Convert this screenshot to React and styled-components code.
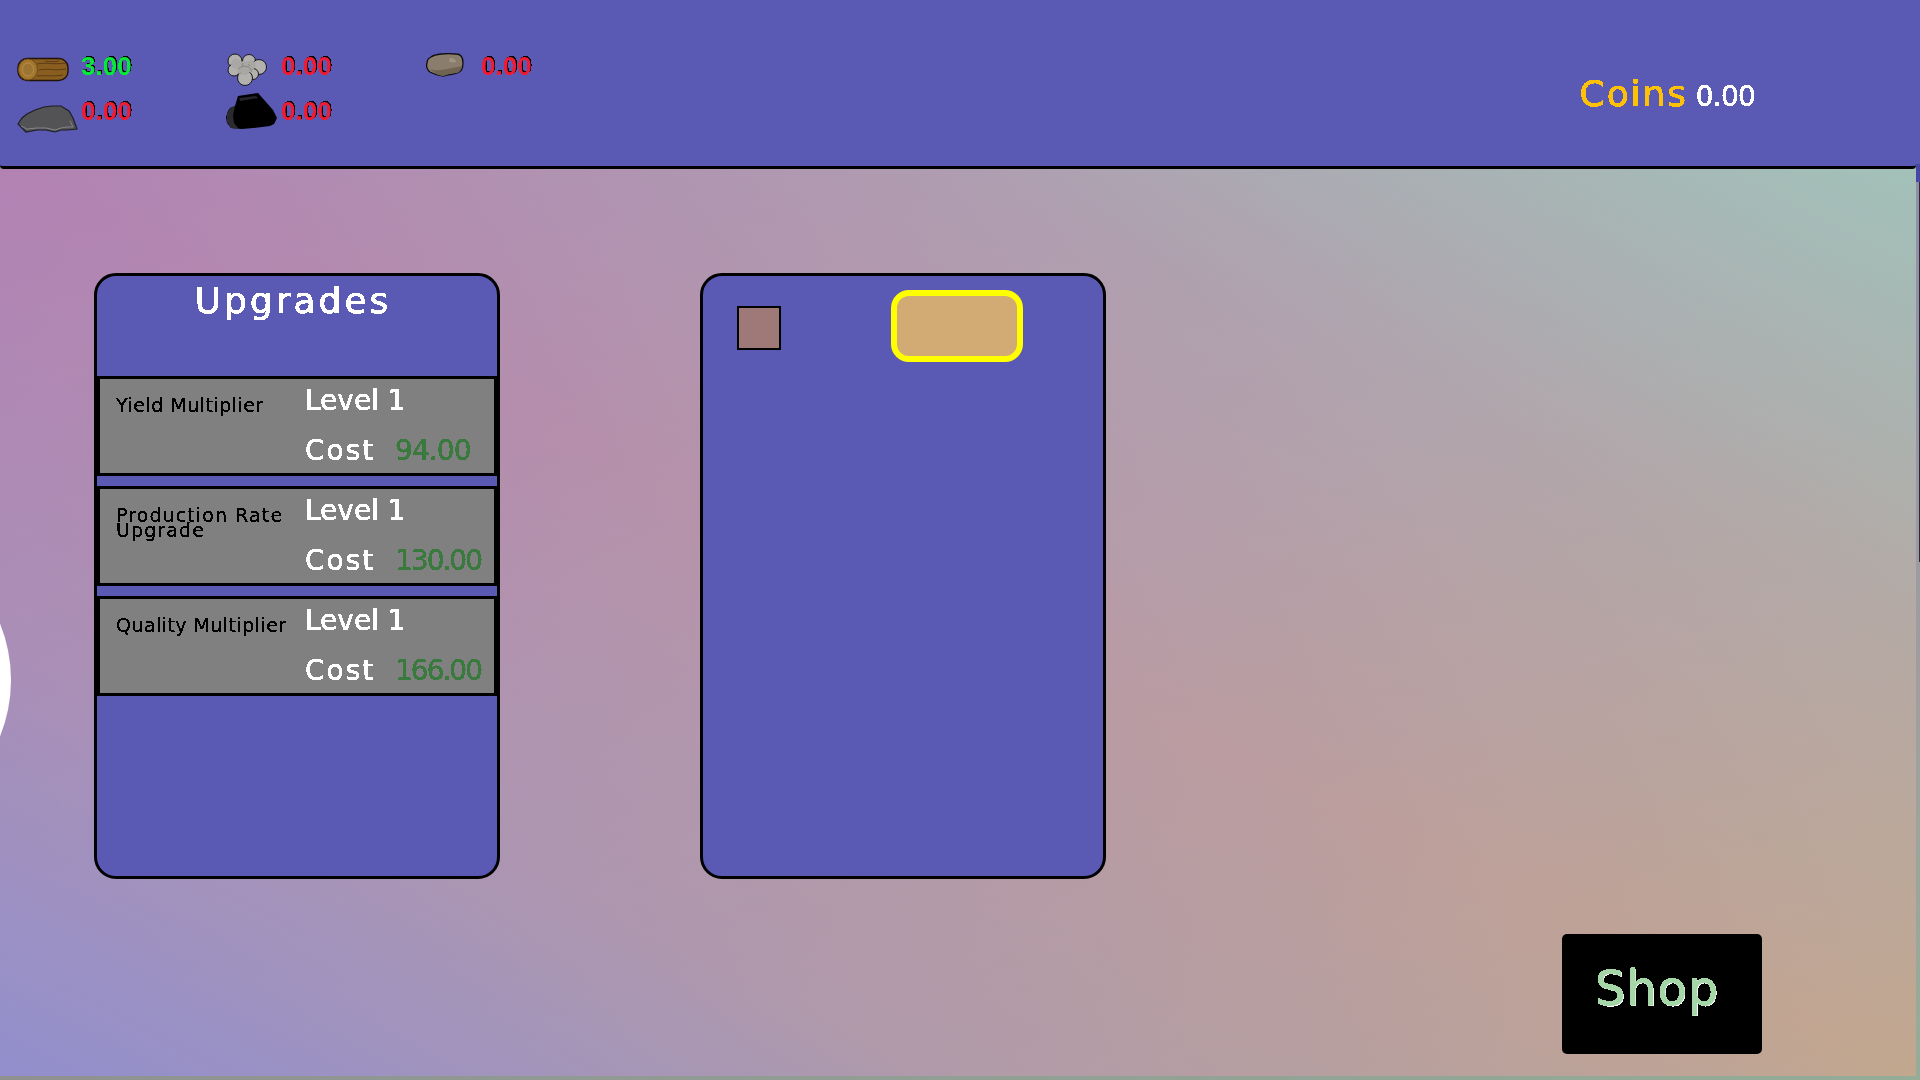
import React from "react";
import styled, { createGlobalStyle, css } from "styled-components";

const INDIGO = "#5a59b3";
const SANS = `"DejaVu Sans", "Liberation Sans", sans-serif`;

const Global = createGlobalStyle`
  html, body { margin: 0; padding: 0; overflow: hidden; background: #8f9090; }
  * { box-sizing: border-box; }
`;

const crisp = css`
  filter: url(#crisp);
`;

const Hidden = styled.svg`
  position: absolute;
  width: 0;
  height: 0;
`;

const Page = styled.div`
  display: flex;
  width: 1920px;
  height: 1080px;
  overflow: hidden;
  background: linear-gradient(to right, #8f9191, #94ad97);
  font-family: ${SANS};
`;

const Game = styled.div`
  display: flex;
  flex-direction: column;
  width: 1916px;
  height: 1076px;
`;

const RightEdge = styled.div`
  position: relative;
  width: 4px;
  height: 1080px;
  background: linear-gradient(
    to bottom,
    ${INDIGO} 0,
    ${INDIGO} 164px,
    #4747a6 164px,
    #4747a6 182px,
    #908fa6 182px,
    #a09f9d 700px,
    #94ad97 1080px
  );
  &::after {
    content: "";
    position: absolute;
    right: 0;
    top: 182px;
    width: 1px;
    height: 380px;
    background: #2a2a3c;
  }
`;

const Header = styled.header`
  display: flex;
  flex: none;
  align-items: flex-start;
  justify-content: space-between;
  height: 169px;
  background: ${INDIGO};
  border-bottom: 3px solid #000;
  border-radius: 0 0 4px 4px;
`;

const Resources = styled.div`
  display: grid;
  grid-template-columns: repeat(3, 200px);
  grid-auto-rows: 45px;
  padding: 45px 0 0 17px;
`;

const Resource = styled.div`
  display: flex;
  align-items: flex-start;
`;

const IconSlot = styled.div`
  flex: none;
  width: 64px;
  height: 45px;
  padding: ${(p) => p.$top}px 0 0 ${(p) => p.$left}px;
`;

const Amount = styled.span`
  ${crisp};
  font-family: "Liberation Sans", sans-serif;
  font-size: 26px;
  font-weight: 700;
  line-height: 43px;
  color: ${(p) => (p.$ok ? "#08e83a" : "#ee1c34")};
  text-shadow: 1px -1px 0 #000;
`;

const Wallet = styled.div`
  display: flex;
  align-items: baseline;
  gap: 8px;
  margin: 76px 161px 0 0;
`;

const CoinLabel = styled.span`
  ${crisp};
  font-size: 36px;
  line-height: 36px;
  letter-spacing: 1.9px;
  color: #ffc107;
  -webkit-text-stroke: 0.7px #ffc107;
`;

const CoinValue = styled.span`
  ${crisp};
  font-size: 28px;
  line-height: 36px;
  letter-spacing: -0.8px;
  color: #fff;
  -webkit-text-stroke: 0.5px #fff;
`;

const Field = styled.main`
  position: relative;
  display: flex;
  flex: 1;
  align-items: flex-start;
  gap: 200px;
  padding: 104px 154px 22px 94px;
  overflow: hidden;
  background:
    linear-gradient(
      to bottom left,
      #a2c1b9 0%,
      rgba(162, 193, 185, 0.3) 25%,
      rgba(162, 193, 185, 0) 50%,
      rgba(146, 143, 205, 0) 50%,
      rgba(146, 143, 205, 0.28) 75%,
      #928fcd 100%
    ),
    linear-gradient(to bottom right, #b282b3 0%, #b798a7 50%, #c2a78f 100%);
`;

const Moon = styled.div`
  position: absolute;
  left: -289px;
  top: 361px;
  width: 300px;
  height: 300px;
  border-radius: 50%;
  background: #fff;
`;

const Panel = styled.section`
  position: relative;
  flex: none;
  width: 406px;
  height: 606px;
  background: ${INDIGO};
  border: 3px solid #000;
  border-radius: 22px;
`;

const Title = styled.h2`
  ${crisp};
  height: 100px;
  margin: 0;
  padding-right: 8px;
  font-size: 36px;
  font-weight: 400;
  line-height: 50px;
  letter-spacing: 3px;
  text-align: center;
  color: #fff;
  -webkit-text-stroke: 0.7px #fff;
`;

const Upgrades = styled.div`
  display: flex;
  flex-direction: column;
  gap: 10px;
`;

const UpgradeRow = styled.article`
  display: flex;
  height: 100px;
  background: #808080;
  border: 3px solid #000;
`;

const UpgradeName = styled.div`
  ${crisp};
  flex: none;
  width: 205px;
  padding: 19px 10px 0 16px;
  font-size: 19px;
  line-height: 15px;
  letter-spacing: ${(p) => p.$track}px;
  color: #000;
  -webkit-text-stroke: 0.25px #000;
`;

const Stats = styled.div`
  display: flex;
  flex-direction: column;
  gap: 6px;
`;

const StatLine = styled.div`
  ${crisp};
  display: flex;
  font-size: 28px;
  line-height: 44px;
  color: #fff;
  -webkit-text-stroke: 0.5px currentColor;
`;

const CostLabel = styled.span`
  flex: none;
  width: 90px;
  letter-spacing: 2px;
`;

const CostValue = styled.span`
  letter-spacing: ${(p) => p.$track}px;
  color: #3a7a3e;
`;

const Swatch = styled.div`
  flex: none;
  width: 44px;
  height: 44px;
  margin: 30px 0 0 34px;
  background: #9f7977;
  border: 2px solid #000;
`;

const Slot = styled.div`
  flex: none;
  width: 132px;
  height: 72px;
  margin: 14px 0 0 110px;
  background: #d2ab74;
  border: 6px solid #ffff00;
  border-radius: 18px;
`;

const Workbench = styled(Panel)`
  display: flex;
  align-items: flex-start;
`;

const ShopButton = styled.button`
  display: flex;
  flex: none;
  align-items: flex-start;
  align-self: flex-end;
  width: 200px;
  height: 120px;
  margin: 0 0 0 auto;
  padding: 24px 0 0 33px;
  border: 0;
  border-radius: 5px;
  background: #000;
  font-family: ${SANS};
  font-size: 48px;
  line-height: 60px;
  color: #a5d6a7;
`;

const ShopText = styled.span`
  ${crisp};
  letter-spacing: 0.8px;
  -webkit-text-stroke: 1px #a5d6a7;
  text-shadow: 1px 1px 0 #fff;
`;

const LogIcon = () => (
  <svg width="52" height="25" viewBox="0 0 52 25">
    <rect x="1" y="1.5" width="50" height="22" rx="9" fill="#8a5d20" stroke="#20140a" strokeWidth="1.4" />
    <path d="M20 7c8-2 16 1 29-1M22 13c9-2 15 1 27-1M20 19c8-1 16 1 26-1M28 4c5 1 10 1 14 0" fill="none" stroke="#5c3d14" strokeWidth="1" />
    <ellipse cx="11" cy="12.5" rx="9.5" ry="10.5" fill="#a4772f" stroke="#6b4a18" strokeWidth="1" />
    <ellipse cx="11" cy="12.5" rx="5.5" ry="6.5" fill="#9c7432" stroke="#b88c46" strokeWidth="1" />
  </svg>
);

const PebblesIcon = () => (
  <svg width="42" height="33" viewBox="0 0 42 33">
    <g fill="#b3b1ad" stroke="#17171a" strokeWidth="1">
      <circle cx="9" cy="8" r="7" />
      <circle cx="23" cy="8" r="6.5" />
      <circle cx="33" cy="14" r="7.5" />
      <circle cx="8" cy="17" r="6" />
      <circle cx="27" cy="21" r="5.5" />
      <circle cx="19" cy="25" r="7.5" />
    </g>
    <g fill="#a9a7a3">
      <circle cx="18" cy="15" r="7" />
      <circle cx="10" cy="11" r="5" />
      <circle cx="25" cy="12" r="4.5" />
    </g>
    <path d="M12 16l5-3 6 1 3 5M16 14l1-4M22 11l2 2M15 20l-3 1" fill="none" stroke="#8a8884" strokeWidth="1" />
  </svg>
);

const StoneIcon = () => (
  <svg width="38" height="25" viewBox="0 0 38 25">
    <path d="M5 4C9 1 20 0 30 1c5 0 7 3 7 9 0 5-1 9-6 10-5 2-9 1-13 3-5 0-10-2-14-4C1 17 0 13 1 10c0-3 2-5 4-6z" fill="#8b7d6b" stroke="#0e0e10" strokeWidth="1.3" />
    <path d="M4 16c7 3 15 0 22-1 5-1 9-1 10-3-1 6-3 8-6 8-5 1-9 1-12 3-5 0-10-3-14-7z" fill="#6f6352" />
    <path d="M24 5c3 0 6 2 6 4-4 1-6 0-7-1z" fill="#a19582" />
  </svg>
);

const SlateIcon = () => (
  <svg width="61" height="28" viewBox="0 0 61 28">
    <path d="M1 19L5 13 10 9 18 5 27 2 35 1 44 1 52 6 56 13 60 24 50 25 44 25 38 27 29 25 20 25 9 27 5 23z" fill="#535255" stroke="#1e1e24" strokeWidth="1.2" />
    <path d="M4 21l6 3 10-1 9 0 9 2 6-2 6-1 6 0-3-6" fill="none" stroke="#84848a" strokeWidth="1" />
  </svg>
);

const CoalIcon = () => (
  <svg width="52" height="36" viewBox="0 0 52 36">
    <path d="M12 3L32 0 40 9 47 17 51 25 48 31 44 33 27 35 16 36 5 35 1 30 0 24 2 18 4 15 9 13z" fill="#000" />
    <path d="M9 13L4 15 1 21 1 29 5 35 13 36 8 30 7 22z" fill="#2b2b2d" />
    <path d="M13 5l17-2 2 2-18 3z" fill="#26262a" />
  </svg>
);

const resources = [
  { icon: <LogIcon />, amount: "3.00", ok: true, left: 0, top: 12 },
  { icon: <PebblesIcon />, amount: "0.00", left: 9, top: 8 },
  { icon: <StoneIcon />, amount: "0.00", left: 9, top: 8 },
  { icon: <SlateIcon />, amount: "0.00", left: 0, top: 15 },
  { icon: <CoalIcon />, amount: "0.00", left: 9, top: 3 },
];

const upgrades = [
  { name: "Yield Multiplier", cost: "94.00", nameTrack: 0.5, costTrack: -0.9 },
  { name: "Production Rate Upgrade", cost: "130.00", nameTrack: 1.1, costTrack: -2 },
  { name: "Quality Multiplier", cost: "166.00", nameTrack: 0.45, costTrack: -2 },
];

export default function App() {
  return (
    <>
      <Global />
      <Hidden aria-hidden="true">
        <filter id="crisp" colorInterpolationFilters="sRGB">
          <feComponentTransfer>
            <feFuncA type="discrete" tableValues="0 1" />
          </feComponentTransfer>
        </filter>
      </Hidden>
      <Page>
        <Game>
          <Header>
            <Resources>
              {resources.map((r, i) => (
                <Resource key={i}>
                  <IconSlot $left={r.left} $top={r.top}>{r.icon}</IconSlot>
                  <Amount $ok={r.ok}>{r.amount}</Amount>
                </Resource>
              ))}
            </Resources>
            <Wallet>
              <CoinLabel>Coins</CoinLabel>
              <CoinValue>0.00</CoinValue>
            </Wallet>
          </Header>
          <Field>
            <Moon />
            <Panel>
              <Title>Upgrades</Title>
              <Upgrades>
                {upgrades.map((u) => (
                  <UpgradeRow key={u.name}>
                    <UpgradeName $track={u.nameTrack}>{u.name}</UpgradeName>
                    <Stats>
                      <StatLine>Level 1</StatLine>
                      <StatLine>
                        <CostLabel>Cost</CostLabel>
                        <CostValue $track={u.costTrack}>{u.cost}</CostValue>
                      </StatLine>
                    </Stats>
                  </UpgradeRow>
                ))}
              </Upgrades>
            </Panel>
            <Workbench>
              <Swatch />
              <Slot />
            </Workbench>
            <ShopButton>
              <ShopText>Shop</ShopText>
            </ShopButton>
          </Field>
        </Game>
        <RightEdge />
      </Page>
    </>
  );
}
